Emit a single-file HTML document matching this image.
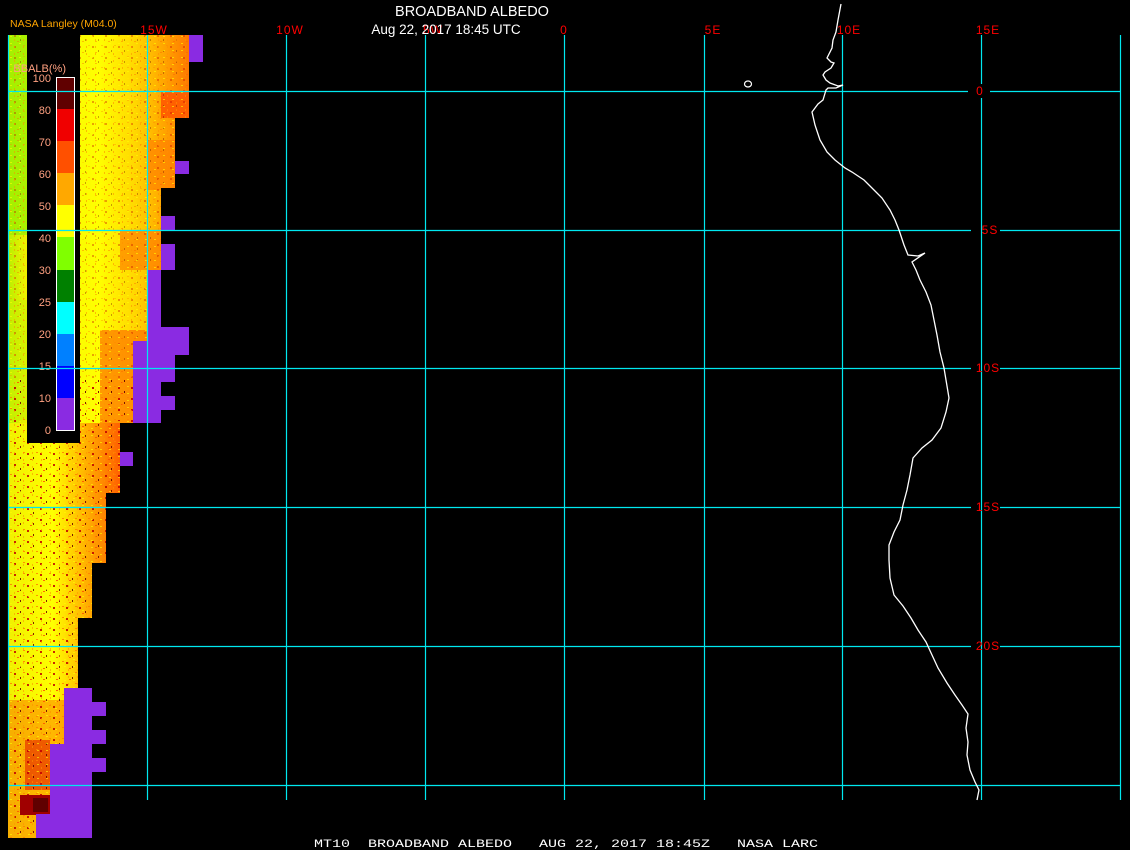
<!DOCTYPE html>
<html><head><meta charset="utf-8"><style>
html,body{margin:0;padding:0;background:#000;width:1130px;height:850px;overflow:hidden}
svg{display:block}
</style></head><body>
<svg width="1130" height="850" viewBox="0 0 1130 850" xmlns="http://www.w3.org/2000/svg">
<defs>
<linearGradient id="g1" x1="0" x2="1" y1="0" y2="0">
<stop offset="0" stop-color="#b8f000"/><stop offset="0.1" stop-color="#f0f000"/><stop offset="0.5" stop-color="#ffff00"/><stop offset="0.7" stop-color="#ffd800"/><stop offset="0.85" stop-color="#ffa800"/><stop offset="1" stop-color="#ff7800"/>
</linearGradient>
<linearGradient id="g3" x1="0" x2="1" y1="0" y2="0">
<stop offset="0" stop-color="#f0f000"/><stop offset="0.4" stop-color="#ffff00"/><stop offset="0.7" stop-color="#ffb000"/><stop offset="1" stop-color="#ff6000"/>
</linearGradient>
<pattern id="sp" width="13" height="11" patternUnits="userSpaceOnUse">
<rect x="1" y="2" width="2" height="2" fill="#c00000"/><rect x="7" y="6" width="1" height="2" fill="#600000"/><rect x="10" y="1" width="2" height="1" fill="#ff8000"/><rect x="4" y="8" width="2" height="1" fill="#ff5000"/>
</pattern>
<pattern id="sp2" width="9" height="7" patternUnits="userSpaceOnUse">
<rect x="1" y="1" width="2" height="1" fill="#ffff00"/><rect x="5" y="4" width="1" height="2" fill="#ff9000"/>
</pattern>
<clipPath id="cp">
<polygon points="8,35 189,35 189,118 175,118 175,188 161,188 161,270 147,270 147,341 133,341 133,423 120,423 120,493 106,493 106,563 92,563 92,618 78,618 78,688 64,688 64,838 8,838"/>
</clipPath>
</defs>

<g clip-path="url(#cp)">
<rect x="8" y="35" width="181" height="388" fill="url(#g1)"/>
<rect x="8" y="423" width="112" height="415" fill="url(#g3)"/>
<rect x="8" y="35" width="19" height="200" fill="#a0f000" opacity="0.85"/>
<rect x="8" y="300" width="19" height="120" fill="#c8f000" opacity="0.6"/>
<rect x="161" y="91" width="28" height="27" fill="#ff6000"/>
<rect x="147" y="140" width="28" height="50" fill="#ff8000" opacity="0.7"/>
<rect x="120" y="230" width="41" height="40" fill="#ff8000" opacity="0.7"/>
<rect x="100" y="330" width="47" height="93" fill="#ff7000" opacity="0.7"/>
<rect x="8" y="700" width="56" height="140" fill="#ff6000" opacity="0.45"/>
<rect x="25" y="740" width="25" height="50" fill="#e00000" opacity="0.5"/>
<rect x="8" y="380" width="190" height="460" fill="url(#sp)" opacity="0.85"/>
<rect x="8" y="35" width="190" height="360" fill="url(#sp)" opacity="0.35"/>
<rect x="8" y="35" width="190" height="800" fill="url(#sp2)" opacity="0.6"/>
<rect x="20" y="795" width="30" height="20" fill="#a00000"/>
<rect x="33" y="798" width="15" height="14" fill="#600000"/>
</g>

<g fill="#8a2be2">
<rect x="189" y="35" width="14" height="27"/>
<rect x="175" y="161" width="14" height="13"/>
<rect x="161" y="216" width="14" height="14"/>
<rect x="161" y="244" width="14" height="26"/>
<rect x="147" y="270" width="14" height="57"/>
<rect x="147" y="327" width="42" height="28"/>
<rect x="133" y="341" width="42" height="41"/>
<rect x="133" y="382" width="28" height="41"/>
<rect x="161" y="396" width="14" height="14"/>
<rect x="120" y="452" width="13" height="14"/>
<rect x="64" y="688" width="28" height="150"/>
<rect x="92" y="702" width="14" height="14"/>
<rect x="92" y="730" width="14" height="14"/>
<rect x="92" y="758" width="14" height="14"/>
<rect x="50" y="744" width="14" height="83"/>
<rect x="36" y="814" width="28" height="24"/>
</g>

<rect x="27" y="35" width="53" height="408" fill="#000"/>
<rect x="56" y="77" width="19" height="32" fill="#600000"/>
<rect x="56" y="109" width="19" height="32" fill="#f00000"/>
<rect x="56" y="141" width="19" height="32" fill="#ff5000"/>
<rect x="56" y="173" width="19" height="32" fill="#ffa800"/>
<rect x="56" y="205" width="19" height="32" fill="#ffff00"/>
<rect x="56" y="237" width="19" height="33" fill="#80ff00"/>
<rect x="56" y="270" width="19" height="32" fill="#008000"/>
<rect x="56" y="302" width="19" height="32" fill="#00ffff"/>
<rect x="56" y="334" width="19" height="32" fill="#0080ff"/>
<rect x="56" y="366" width="19" height="32" fill="#0000ff"/>
<rect x="56" y="398" width="19" height="32" fill="#8a2be2"/>
<rect x="56.5" y="77.5" width="18" height="353" fill="none" stroke="#fff" stroke-width="1"/>
<g font-family="Liberation Sans, sans-serif" font-size="11" fill="#ffa080" text-anchor="end">
<text x="51" y="82">100</text><text x="51" y="114">80</text><text x="51" y="146">70</text><text x="51" y="178">60</text><text x="51" y="210">50</text><text x="51" y="242">40</text><text x="51" y="274">30</text><text x="51" y="306">25</text><text x="51" y="338">20</text><text x="51" y="370">15</text><text x="51" y="402">10</text><text x="51" y="434">0</text>
<text x="66" y="72">BBALB(%)</text>
</g>
<text x="10" y="27" font-family="Liberation Sans, sans-serif" font-size="10.5" fill="#ffa500">NASA Langley (M04.0)</text>

<g stroke="#00e8f0" stroke-width="1.2">
<line x1="8.5" y1="35" x2="8.5" y2="800"/>
<line x1="147.5" y1="35" x2="147.5" y2="800"/>
<line x1="286.5" y1="35" x2="286.5" y2="800"/>
<line x1="425.5" y1="35" x2="425.5" y2="800"/>
<line x1="564.5" y1="35" x2="564.5" y2="800"/>
<line x1="704.5" y1="35" x2="704.5" y2="800"/>
<line x1="842.5" y1="35" x2="842.5" y2="800"/>
<line x1="981.5" y1="35" x2="981.5" y2="84"/>
<line x1="981.5" y1="98" x2="981.5" y2="800"/>
<line x1="1120.5" y1="35" x2="1120.5" y2="800"/>
<line x1="8" y1="91.5" x2="968" y2="91.5"/><line x1="990" y1="91.5" x2="1120" y2="91.5"/>
<line x1="8" y1="230.5" x2="971" y2="230.5"/><line x1="1000" y1="230.5" x2="1120" y2="230.5"/>
<line x1="8" y1="368.5" x2="971" y2="368.5"/><line x1="1000" y1="368.5" x2="1120" y2="368.5"/>
<line x1="8" y1="507.5" x2="971" y2="507.5"/><line x1="1000" y1="507.5" x2="1120" y2="507.5"/>
<line x1="8" y1="646.5" x2="971" y2="646.5"/><line x1="1000" y1="646.5" x2="1120" y2="646.5"/>
<line x1="8" y1="785.5" x2="1120" y2="785.5"/>
</g>

<polyline fill="none" stroke="#fff" stroke-width="1.3" points="841,4 838,20 836,32 833,40 832,48 827,58 831,62 834,63 831,68 825,72 823,75 826,80 830,83 838,86 843,85 836,88 828,88 826,90 823,100 818,104 812,112 815,125 820,140 827,152 835,160 845,168 852,172 864,180 874,190 882,198 890,210 895,220 899,230 904,245 908,255 918,256 925,253 912,262 916,270 920,280 926,292 931,305 934,320 937,335 940,352 944,368 946,380 949,398 946,412 941,428 932,440 922,448 913,458 910,475 907,490 903,505 900,520 894,532 889,545 889,560 890,578 894,595 903,606 911,618 918,630 926,642 932,655 938,668 947,683 955,695 962,705 968,714 966,728 968,742 967,755 970,770 975,782 979,790 977,800"/>
<ellipse cx="748" cy="84" rx="3.5" ry="3" fill="none" stroke="#fff" stroke-width="1.2"/>

<text x="472" y="16" font-family="Liberation Sans, sans-serif" font-size="14.5" fill="#fff" text-anchor="middle">BROADBAND ALBEDO</text>
<g font-family="Liberation Sans, sans-serif" font-size="12" fill="#ff0000" text-anchor="middle" letter-spacing="1">
<text x="154" y="34">15W</text>
<text x="290" y="34">10W</text>
<text x="433" y="34">5W</text>
<text x="564" y="34">0</text>
<text x="713" y="34">5E</text>
<text x="849" y="34">10E</text>
<text x="988" y="34">15E</text>
<text x="980" y="95">0</text>
<text x="990" y="234">5S</text>
<text x="988" y="372">10S</text>
<text x="988" y="511">15S</text>
<text x="988" y="650">20S</text>
</g>
<text x="446" y="34" font-family="Liberation Sans, sans-serif" font-size="13.5" fill="#fff" text-anchor="middle">Aug 22, 2017 18:45 UTC</text>
<text x="314" y="847" font-family="Liberation Mono, monospace" font-size="11" fill="#fff" textLength="504" lengthAdjust="spacingAndGlyphs" xml:space="preserve">MT10  BROADBAND ALBEDO   AUG 22, 2017 18:45Z   NASA LARC</text>
</svg>
</body></html>
